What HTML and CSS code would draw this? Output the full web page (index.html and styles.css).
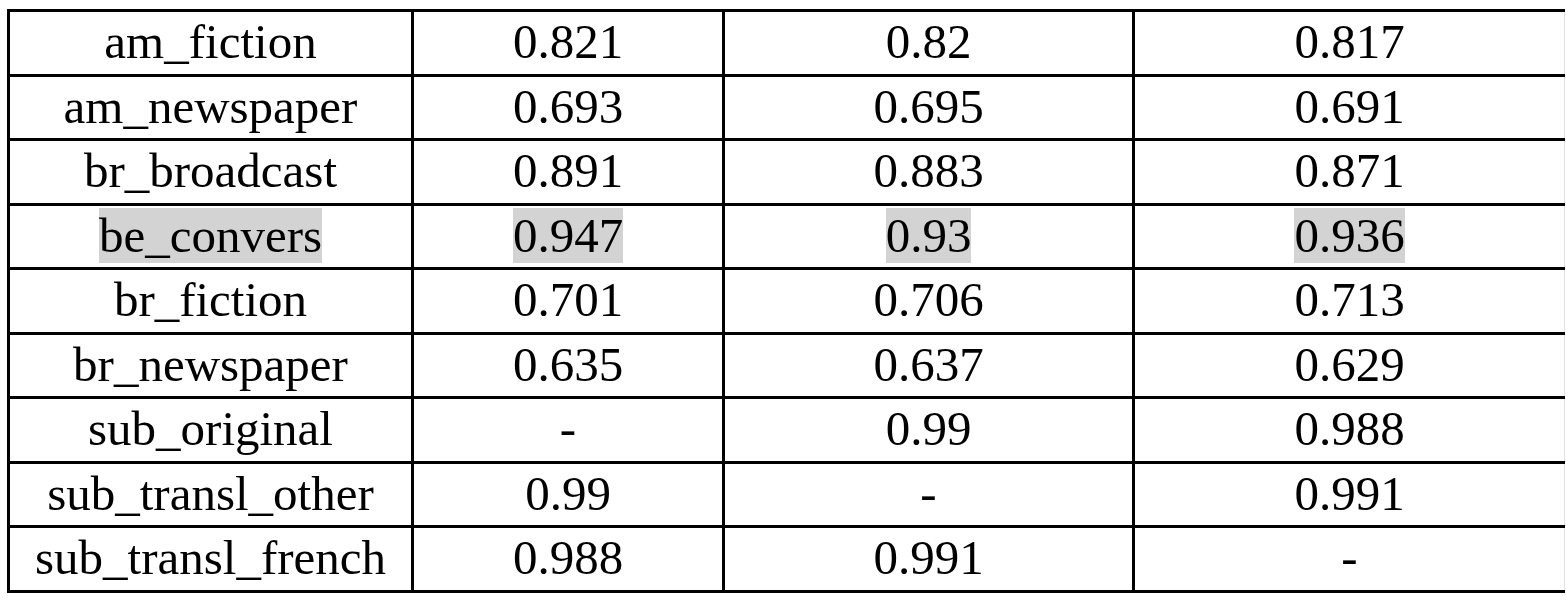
FILE: index.html
```html
<!DOCTYPE html>
<html lang="en">
<head>
	<meta charset="UTF-8">
	<title>Scores</title>
	<link rel="stylesheet" href="styles.css">
</head>
<body>
	<table class="scores">
		<colgroup>
			<col class="c_name">
			<col class="c_a">
			<col class="c_b">
			<col class="c_c">
		</colgroup>
		<tr><td>am_fiction</td><td>0.821</td><td>0.82</td><td>0.817</td></tr>
		<tr><td>am_newspaper</td><td>0.693</td><td>0.695</td><td>0.691</td></tr>
		<tr><td>br_broadcast</td><td>0.891</td><td>0.883</td><td>0.871</td></tr>
		<tr>
			<td><span class="hl">be_convers</span></td>
			<td><span class="hl">0.947</span></td>
			<td><span class="hl">0.93</span></td>
			<td><span class="hl">0.936</span></td>
		</tr>
		<tr><td>br_fiction</td><td>0.701</td><td>0.706</td><td>0.713</td></tr>
		<tr><td>br_newspaper</td><td>0.635</td><td>0.637</td><td>0.629</td></tr>
		<tr><td>sub_original</td><td>-</td><td>0.99</td><td>0.988</td></tr>
		<tr><td>sub_transl_other</td><td>0.99</td><td>-</td><td>0.991</td></tr>
		<tr><td>sub_transl_french</td><td>0.988</td><td>0.991</td><td>-</td></tr>
	</table>
</body>
</html>
```

FILE: styles.css
```css
	body{
		margin: 0;
		background: #fff;
	}
	.scores{
		margin: 9px 0 0 7px;
		width: 1556px;
		border-collapse: collapse;
		table-layout: fixed;
		font-family: "Liberation Serif", "Times New Roman", serif;
		font-size: 49px;
		color: #000;
	}
	.c_name{ width: 404px; }
	.c_a{ width: 311px; }
	.c_b{ width: 410px; }
	.c_c{ width: 431px; }
	.scores td{
		height: 59.5px;
		padding: 0 0 2px 0;
		text-align: center;
		vertical-align: middle;
		border: 3px solid #000;
		white-space: nowrap;
	}
	.scores td:last-child{
		border-right: 1px solid #e2e2e2;
	}
	.hl{
		background: #d3d3d3;
	}
```
